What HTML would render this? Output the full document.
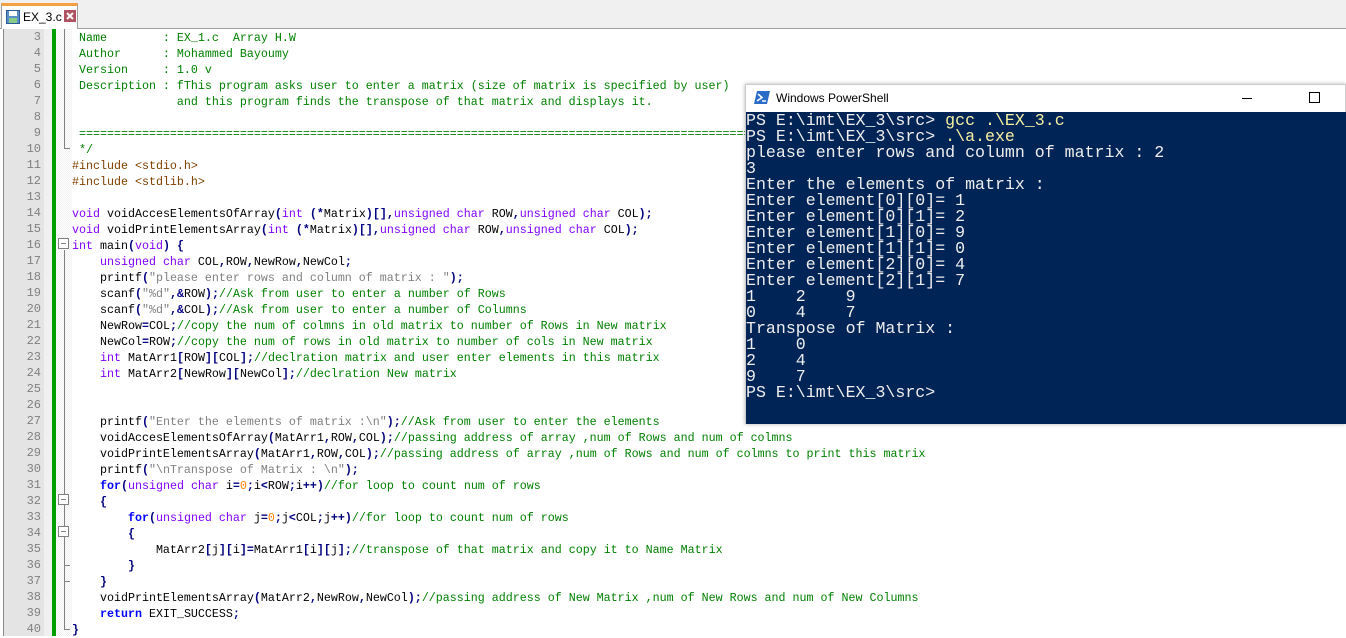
<!DOCTYPE html>
<html><head><meta charset="utf-8"><style>
*{margin:0;padding:0;box-sizing:border-box}
body{width:1346px;height:636px;overflow:hidden;background:#fff;position:relative;font-family:"Liberation Sans",sans-serif}
#tabbar{position:absolute;left:0;top:0;width:1346px;height:29px;background:#f0f0f0;border-bottom:1px solid #a0a0a0}
#tab{position:absolute;left:1px;top:3px;width:77px;height:26px;background:#fff;border:1px solid #a0a0a0;border-bottom:none;border-top:3px solid #f5a040;font-size:12px;padding:4px 0 0 21px;color:#000}
#gut{position:absolute;left:3px;top:29px;width:41px;height:607px;background:#e4e4e4;border-left:1px solid #888}
#gut2{position:absolute;left:44px;top:29px;width:8px;height:607px;background:#f0f0f0}
#green{position:absolute;left:52px;top:29px;width:4px;height:607px;background:#00a000}
#fold{position:absolute;left:56px;top:29px;width:16px;height:607px;background:repeating-conic-gradient(#f0f0f0 0 25%,#fff 0 50%) 0 0/2px 2px}
.ln{position:absolute;left:3px;width:38px;text-align:right;font:12px "Liberation Mono",monospace;color:#808080}
.code{position:absolute;left:72px;white-space:pre;font:11.66px "Liberation Mono",monospace;color:#000;line-height:16px}
.c{color:#008000}.p{color:#804000}.k{color:#8000ff}.b{color:#0000ff;font-weight:bold}.s{color:#808080}.n{color:#ff8000}.o{color:#000080;font-weight:bold}
.fl{position:absolute;background:#808080}
.box{position:absolute;left:58px;width:11px;height:11px;border:1px solid #808080;background:#fff}
.box:after{content:"";position:absolute;left:2px;top:4px;width:5px;height:1px;background:#808080}
#ps{position:absolute;left:745px;top:84px;width:601px;height:340px;background:#fff;border:1px solid #ccc;box-shadow:0 0 4px rgba(0,0,0,.3)}
#pst{height:27px;font-size:12px;padding:6px 0 0 30px;color:#000;position:relative}
#con{position:absolute;left:0;top:27px;width:601px;height:312px;background:#012456;color:#eee;font:16.6px "Liberation Mono",monospace;line-height:16px;white-space:pre;padding-top:1px}
.y{color:#f5f0a0}
</style></head><body>
<div id="tabbar"><div id="tab"><svg style="position:absolute;left:4px;top:4px" width="14" height="14"><rect x="0.5" y="0.5" width="13" height="13" fill="#5b8fc8" stroke="#2a5a9a"/><rect x="3" y="1" width="8" height="5" fill="#fff"/><rect x="3" y="8" width="8" height="5" fill="#8c8"/></svg>EX_3.c<svg style="position:absolute;left:62px;top:4px" width="12" height="12"><rect width="12" height="12" fill="#b05060"/><path d="M3 3L9 9M9 3L3 9" stroke="#fff" stroke-width="2"/></svg></div></div>
<div id="gut"></div><div id="gut2"></div><div id="green"></div><div id="fold"></div>
<div id="lns"></div>
<div class="fl" style="left:64px;top:29px;width:1px;height:120px"></div>
<div class="fl" style="left:64px;top:148px;width:6px;height:1px"></div>
<div class="fl" style="left:64px;top:250px;width:1px;height:380px"></div>
<div class="fl" style="left:64px;top:629px;width:6px;height:1px"></div>
<div class="fl" style="left:64px;top:565px;width:6px;height:1px"></div>
<div class="fl" style="left:64px;top:581px;width:6px;height:1px"></div>
<div class="box" style="top:238px"></div>
<div class="box" style="top:494px"></div>
<div class="box" style="top:526px"></div>
<div class="code" style="top:30px"><span class="c"> Name        : EX_1.c  Array H.W
 Author      : Mohammed Bayoumy
 Version     : 1.0 v
 Description : fThis program asks user to enter a matrix (size of matrix is specified by user)
               and this program finds the transpose of that matrix and displays it.

 ========================================================================================================
 */</span>
<span class="p">#include &lt;stdio.h&gt;</span>
<span class="p">#include &lt;stdlib.h&gt;</span>

<span class="k">void</span> voidAccesElementsOfArray<span class="o">(</span><span class="k">int</span> <span class="o">(*</span>Matrix<span class="o">)[],</span><span class="k">unsigned char</span> ROW<span class="o">,</span><span class="k">unsigned char</span> COL<span class="o">);</span>
<span class="k">void</span> voidPrintElementsArray<span class="o">(</span><span class="k">int</span> <span class="o">(*</span>Matrix<span class="o">)[],</span><span class="k">unsigned char</span> ROW<span class="o">,</span><span class="k">unsigned char</span> COL<span class="o">);</span>
<span class="k">int</span> main<span class="o">(</span><span class="k">void</span><span class="o">)</span> <span class="o">{</span>
    <span class="k">unsigned char</span> COL<span class="o">,</span>ROW<span class="o">,</span>NewRow<span class="o">,</span>NewCol<span class="o">;</span>
    printf<span class="o">(</span><span class="s">"please enter rows and column of matrix : "</span><span class="o">);</span>
    scanf<span class="o">(</span><span class="s">"%d"</span><span class="o">,&amp;</span>ROW<span class="o">);</span><span class="c">//Ask from user to enter a number of Rows</span>
    scanf<span class="o">(</span><span class="s">"%d"</span><span class="o">,&amp;</span>COL<span class="o">);</span><span class="c">//Ask from user to enter a number of Columns</span>
    NewRow<span class="o">=</span>COL<span class="o">;</span><span class="c">//copy the num of colmns in old matrix to number of Rows in New matrix</span>
    NewCol<span class="o">=</span>ROW<span class="o">;</span><span class="c">//copy the num of rows in old matrix to number of cols in New matrix</span>
    <span class="k">int</span> MatArr1<span class="o">[</span>ROW<span class="o">][</span>COL<span class="o">];</span><span class="c">//declration matrix and user enter elements in this matrix</span>
    <span class="k">int</span> MatArr2<span class="o">[</span>NewRow<span class="o">][</span>NewCol<span class="o">];</span><span class="c">//declration New matrix</span>


    printf<span class="o">(</span><span class="s">"Enter the elements of matrix :\n"</span><span class="o">);</span><span class="c">//Ask from user to enter the elements</span>
    voidAccesElementsOfArray<span class="o">(</span>MatArr1<span class="o">,</span>ROW<span class="o">,</span>COL<span class="o">);</span><span class="c">//passing address of array ,num of Rows and num of colmns</span>
    voidPrintElementsArray<span class="o">(</span>MatArr1<span class="o">,</span>ROW<span class="o">,</span>COL<span class="o">);</span><span class="c">//passing address of array ,num of Rows and num of colmns to print this matrix</span>
    printf<span class="o">(</span><span class="s">"\nTranspose of Matrix : \n"</span><span class="o">);</span>
    <span class="b">for</span><span class="o">(</span><span class="k">unsigned char</span> i<span class="o">=</span><span class="n">0</span><span class="o">;</span>i<span class="o">&lt;</span>ROW<span class="o">;</span>i<span class="o">++)</span><span class="c">//for loop to count num of rows</span>
    <span class="o">{</span>
        <span class="b">for</span><span class="o">(</span><span class="k">unsigned char</span> j<span class="o">=</span><span class="n">0</span><span class="o">;</span>j<span class="o">&lt;</span>COL<span class="o">;</span>j<span class="o">++)</span><span class="c">//for loop to count num of rows</span>
        <span class="o">{</span>
            MatArr2<span class="o">[</span>j<span class="o">][</span>i<span class="o">]=</span>MatArr1<span class="o">[</span>i<span class="o">][</span>j<span class="o">];</span><span class="c">//transpose of that matrix and copy it to Name Matrix</span>
        <span class="o">}</span>
    <span class="o">}</span>
    voidPrintElementsArray<span class="o">(</span>MatArr2<span class="o">,</span>NewRow<span class="o">,</span>NewCol<span class="o">);</span><span class="c">//passing address of New Matrix ,num of New Rows and num of New Columns</span>
    <span class="b">return</span> EXIT_SUCCESS<span class="o">;</span>
<span class="o">}</span></div>
<div id="ps"><div id="pst"><svg style="position:absolute;left:8px;top:6px" width="16" height="13"><path d="M3 0H16L13 13H0Z" fill="#2a6cc8"/><path d="M4 3L8 6.5L3 10" stroke="#fff" stroke-width="1.5" fill="none"/><path d="M8 10H12" stroke="#fff" stroke-width="1.5"/></svg>Windows PowerShell<div style="position:absolute;left:496px;top:13px;width:10px;height:1px;background:#000"></div><div style="position:absolute;left:563px;top:7px;width:11px;height:11px;border:1px solid #000"></div></div>
<div id="con">PS E:\imt\EX_3\src&gt; <span class="y">gcc .\EX_3.c</span>
PS E:\imt\EX_3\src&gt; <span class="y">.\a.exe</span>
please enter rows and column of matrix : 2
3
Enter the elements of matrix :
Enter element[0][0]= 1
Enter element[0][1]= 2
Enter element[1][0]= 9
Enter element[1][1]= 0
Enter element[2][0]= 4
Enter element[2][1]= 7
1    2    9
0    4    7
Transpose of Matrix :
1    0
2    4
9    7
PS E:\imt\EX_3\src&gt;</div></div>
<script>
var h='';for(var n=3;n<=40;n++){h+='<div class="ln" style="top:'+(30+(n-3)*16)+'px">'+n+'</div>';}
document.getElementById('lns').innerHTML=h;
</script>
</body></html>
